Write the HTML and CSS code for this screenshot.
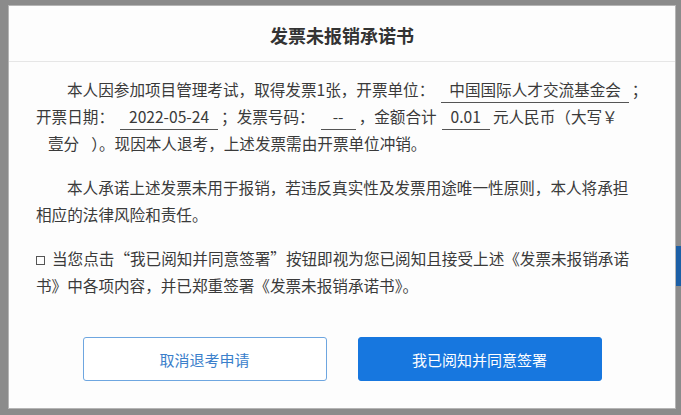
FILE: index.html
```html
<!DOCTYPE html>
<html lang="zh-CN">
<head>
<meta charset="utf-8">
<title>发票未报销承诺书</title>
<link rel="stylesheet" href="styles.css">
</head>
<body>
<div class="page">
  <div class="dialog">
    <div class="dialog-header">发票未报销承诺书</div>
    <div class="dialog-body">
      <p class="para indent">本人因参加项目管理考试，取得发票1张，开票单位：<span class="fill fill-unit">中国国际人才交流基金会</span>；<br>开票日期：<span class="fill fill-date">2022-05-24</span>；发票号码：<span class="fill fill-no">--</span>，金额合计<span class="fill fill-amt">0.01</span>元人民币（大写￥<br><span class="plain-fill">壹分</span>）。现因本人退考，上述发票需由开票单位冲销。</p>
      <p class="para indent">本人承诺上述发票未用于报销，若违反真实性及发票用途唯一性原则，本人将承担<br>相应的法律风险和责任。</p>
      <p class="para agree"><span class="check"></span>当您点击“我已阅知并同意签署”按钮即视为您已阅知且接受上述《发票未报销承诺<br>书》中各项内容，并已郑重签署《发票未报销承诺书》。</p>
    </div>
    <div class="dialog-footer">
      <button class="btn btn-outline">取消退考申请</button>
      <button class="btn btn-primary">我已阅知并同意签署</button>
    </div>
  </div>
  <div class="side-tab"></div>
</div>
</body>
</html>
```

FILE: styles.css
```css
* { box-sizing: border-box; }
html, body { margin: 0; padding: 0; }
body {
  width: 681px;
  height: 415px;
  overflow: hidden;
  background: #8b8b8b;
  font-family: "Noto Sans CJK SC", "Noto Sans", sans-serif;
}
.page {
  position: relative;
  width: 681px;
  height: 415px;
  padding: 6px 6px 0 9px;
}
.dialog {
  width: 666px;
  height: 402px;
  background: #fdfdfd;
  box-shadow: 0 0 0 1px #b5b5b5;
  display: flex;
  flex-direction: column;
}
.dialog-header {
  height: 56px;
  border-bottom: 1px solid #e6e6e6;
  display: flex;
  align-items: center;
  justify-content: center;
  font-size: 18px;
  font-weight: bold;
  color: #333;
  padding-top: 2px;
}
.dialog-body {
  padding: 14px 12px 0 27px;
  color: #3a3a3a;
  font-size: 15.6px;
  line-height: 27px;
  white-space: nowrap;
}
.para { margin: 0 0 17px 0; }
.indent { text-indent: 31px; }
.fill {
  display: inline-block;
  text-indent: 0;
  border-bottom: 1px solid #555;
  line-height: 20px;
  padding-bottom: 3px;
  margin-bottom: -3px;
  text-align: center;
  margin-left: 3px;
  margin-right: 3px;
}
.fill-unit { padding-left: 8px; padding-right: 8px; margin-left: 7px; }
.fill-date { padding-left: 9px; padding-right: 9px; margin-left: 6px; }
.fill-no { padding-left: 10px; padding-right: 10px; width: 35px; margin-left: 6px; }
.fill-amt { padding-left: 9px; padding-right: 9px; margin-left: 5px; }
.plain-fill { padding: 0 12px 0 12px; }
.check {
  display: inline-block;
  width: 9px;
  height: 9px;
  border: 1px solid #555;
  margin-right: 7px;
  vertical-align: 0;
}
.dialog-footer {
  display: flex;
  justify-content: center;
  gap: 31px;
  margin-top: 21px;
}
.btn {
  width: 244px;
  height: 44px;
  border-radius: 3px;
  font-family: inherit;
  font-size: 15px;
  cursor: pointer;
}
.btn-outline {
  background: #fff;
  border: 1px solid #6ea6e0;
  color: #3b7fcb;
}
.btn-primary {
  background: #1777df;
  border: 1px solid #1777df;
  color: #fff;
}
.side-tab {
  position: absolute;
  right: 0;
  top: 246px;
  width: 5px;
  height: 40px;
  background: #1c5fa6;
}
```
